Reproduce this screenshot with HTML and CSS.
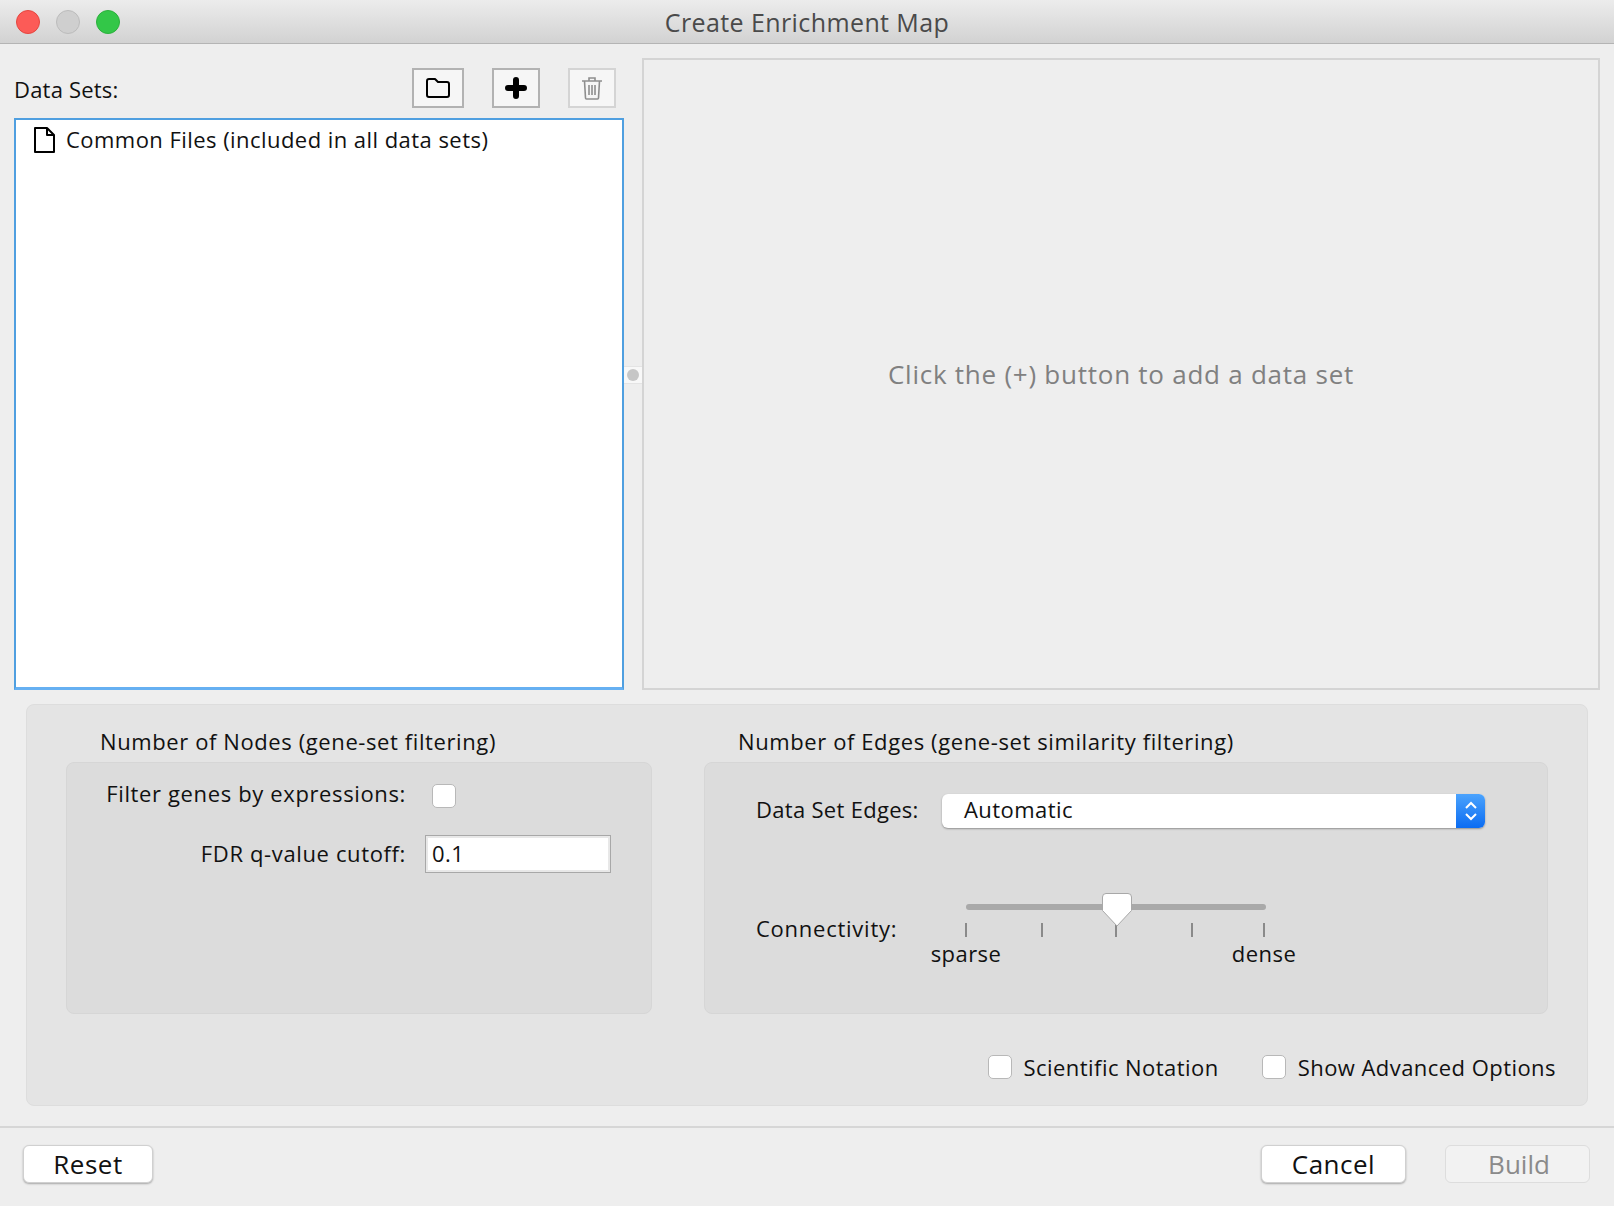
FILE: index.html
```html
<!DOCTYPE html>
<html lang="en">
<head>
    <meta charset="UTF-8">
    <title>Create Enrichment Map</title>
    <link rel="stylesheet" href="styles.css">
</head>
<body>
    <div class="window">
        <div class="titlebar">
            <div class="lights">
                <span class="light red"></span>
                <span class="light grey"></span>
                <span class="light green"></span>
            </div>
            <div class="title">Create Enrichment Map</div>
        </div>

        <div class="top">
            <div class="datasets">
                <div class="datasets-head">
                    <span class="datasets-label">Data Sets:</span>
                    <button class="tool tool-folder">
                        <svg width="25" height="22" viewBox="0 0 25 22"><path d="M3 2h6l3 3h9a2 2 0 0 1 2 2v11a2 2 0 0 1-2 2H3a2 2 0 0 1-2-2V4a2 2 0 0 1 2-2z" fill="none" stroke="#000" stroke-width="2" stroke-linejoin="round"/></svg>
                    </button>
                    <button class="tool">
                        <svg width="22" height="22" viewBox="0 0 22 22"><path d="M11 3v16M3 11h16" stroke="#000" stroke-width="6" stroke-linecap="round"/></svg>
                    </button>
                    <button class="tool tool-off">
                        <svg width="22" height="24" viewBox="0 0 22 24" fill="none" stroke="#8e8e8e" stroke-width="1.6"><path d="M1 5h20M8 5V2h6v3M3.500 5l1 17a1 1 0 0 0 1 1h11a1 1 0 0 0 1-1l1-17M8 9v10M11 9v10M14 9v10"/></svg>
                    </button>
                </div>
                <div class="list">
                    <div class="list-item">
                        <svg width="23" height="26" viewBox="0 0 23 26" fill="none" stroke="#000" stroke-width="2" stroke-linejoin="round"><path d="M2 1h12l7 7v17H2zM14 1v7h7"/></svg>
                        <span class="list-text">Common Files (included in all data sets)</span>
                    </div>
                </div>
            </div>
            <div class="divider"><span class="grip"></span></div>
            <div class="empty">Click the (+) button to add a data set</div>
        </div>

        <div class="settings">
            <div class="groups">
                <div class="group">
                    <div class="group-title">Number of Nodes (gene-set filtering)</div>
                    <div class="group-box nodes">
                        <label class="nodes-label nodes-label-first">Filter genes by expressions:</label>
                        <input class="check check-filter" type="checkbox">
                        <label class="nodes-label">FDR q-value cutoff:</label>
                        <input class="cutoff" type="text" value="0.1">
                    </div>
                </div>
                <div class="group">
                    <div class="group-title">Number of Edges (gene-set similarity filtering)</div>
                    <div class="group-box edges">
                        <label class="edges-label">Data Set Edges:</label>
                        <div class="select">
                            <span class="select-text">Automatic</span>
                            <span class="select-arrows">
                                <svg width="14" height="22" viewBox="0 0 14 22" fill="none" stroke="#fff" stroke-width="2"><path d="M2 8l5-5 5 5M2 14l5 5 5-5"/></svg>
                            </span>
                        </div>
                        <label class="connectivity">Connectivity:</label>
                        <div class="slider">
                            <div class="track"></div>
                            <div class="ticks"><i></i><i></i><i></i><i></i><i></i></div>
                            <div class="scale"><span>sparse</span><span>dense</span></div>
                            <svg class="thumb" width="32" height="36" viewBox="0 0 32 36"><path d="M5 1.500h22a3.500 3.500 0 0 1 3.500 3.500v13.500L16 34 1.500 18.500V5A3.500 3.500 0 0 1 5 1.500z" fill="#fff" stroke="#a8a8a8"/></svg>
                        </div>
                    </div>
                </div>
            </div>
            <div class="options">
                <label class="option"><input class="check" type="checkbox">Scientific Notation</label>
                <label class="option"><input class="check" type="checkbox">Show Advanced Options</label>
            </div>
        </div>

        <div class="footer">
            <button class="btn btn-reset">Reset</button>
            <button class="btn">Cancel</button>
            <button class="btn btn-off">Build</button>
        </div>
    </div>
</body>
</html>
```

FILE: styles.css
```css
* {
    box-sizing: border-box;
}
body {
    margin: 0;
    font-family: "Open Sans", sans-serif;
    font-size: 22px;
    letter-spacing: 0.45px;
    color: #111;
    background-color: #eeeeee;
}
.window {
    width: 1614px;
    height: 1206px;
    display: flex;
    flex-direction: column;
    overflow: hidden;
}
.titlebar {
    height: 44px;
    flex: none;
    display: grid;
    grid-template-columns: 1fr auto 1fr;
    align-items: center;
    background: linear-gradient(#ececec, #d2d2d2);
    border-bottom: 1px solid #b4b4b4;
}
.lights {
    display: flex;
    gap: 16px;
    padding-left: 16px;
}
.light {
    width: 24px;
    height: 24px;
    border-radius: 50%;
}
.red {
    background-color: #fc5b57;
    border: 1px solid #e5463f;
}
.grey {
    background-color: #cfcfcf;
    border: 1px solid #bcbcbc;
}
.green {
    background-color: #33c748;
    border: 1px solid #2bb03c;
}
.title {
    color: #4a4a4a;
    font-size: 25px;
    letter-spacing: 0.4px;
}
.top {
    height: 646px;
    flex: none;
    display: flex;
    padding: 14px 14px 0;
}
.datasets {
    width: 610px;
    display: flex;
    flex-direction: column;
}
.datasets-head {
    height: 60px;
    flex: none;
    display: flex;
    align-items: flex-start;
    gap: 28px;
    padding: 10px 8px 0 0;
}
.datasets-label {
    flex: 1;
    margin-top: 6px;
    letter-spacing: 0.2px;
}
.tool {
    width: 48px;
    height: 40px;
    padding: 0;
    display: flex;
    align-items: center;
    justify-content: center;
    background-color: #f6f6f6;
    border: 2px solid #b2b2b2;
}
.tool-folder {
    width: 52px;
}
.tool-off {
    border-color: #d4d4d4;
}
.list {
    flex: 1;
    background-color: #fff;
    border: 2px solid #4f9fe0;
    border-bottom: 3px solid #66b0f2;
}
.list-item {
    display: flex;
    align-items: center;
    gap: 10px;
    padding: 6px 0 0 17px;
}
.list-text {
    margin-top: -2px;
}
.divider {
    width: 18px;
    flex: none;
    display: flex;
    align-items: center;
    position: relative;
}
.grip {
    width: 18px;
    height: 18px;
    margin-top: 2px;
    display: flex;
    align-items: center;
    justify-content: center;
    background-color: #f8f8f8;
    border-top: 1px solid #e4e4e4;
    border-bottom: 1px solid #e4e4e4;
}
.grip::after {
    content: "";
    width: 12px;
    height: 12px;
    border-radius: 50%;
    background-color: #c6c6c6;
}
.empty {
    flex: 1;
    display: flex;
    align-items: center;
    justify-content: center;
    color: #808080;
    font-size: 26px;
    letter-spacing: 0.75px;
    border: 2px solid #d4d4d4;
}
.settings {
    height: 402px;
    flex: none;
    margin: 14px 26px 20px;
    padding: 0 39px;
    background-color: #e4e4e4;
    border: 1px solid #dddddd;
    border-radius: 8px;
}
.groups {
    display: grid;
    grid-template-columns: 586px 844px;
    gap: 52px;
}
.group-title {
    height: 57px;
    padding: 21px 0 0 34px;
    letter-spacing: 0.6px;
}
.group-box {
    height: 252px;
    background-color: #dcdcdc;
    border: 1px solid #d6d6d6;
    border-radius: 8px;
}
.nodes {
    display: grid;
    grid-template-columns: 339px 1fr;
    grid-template-rows: 24px 38px;
    row-gap: 27px;
    align-items: center;
    padding-top: 21px;
}
.nodes-label {
    margin-top: -2px;
    text-align: right;
    white-space: nowrap;
    letter-spacing: 0.63px;
}
.nodes-label-first {
    margin-top: -7px;
}
.check {
    appearance: none;
    width: 24px;
    height: 24px;
    margin: 0;
    flex: none;
    background-color: #fff;
    border: 1px solid #b8b8b8;
    border-radius: 5px;
}
.check-filter {
    margin-left: 26px;
}
.cutoff {
    width: 186px;
    height: 38px;
    margin-left: 19px;
    padding: 0 6px 2px;
    font: inherit;
    letter-spacing: inherit;
    color: #111;
    background-color: #fff;
    border: 1px solid #a8a8a8;
    box-shadow: inset 0 0 0 2px #e8e8e8;
}
.edges {
    display: grid;
    grid-template-columns: 186px 543px;
    grid-template-rows: 34px auto;
    row-gap: 65px;
    align-items: center;
    align-content: start;
    padding: 31px 0 0 51px;
}
.edges-label {
    margin-top: -4px;
    letter-spacing: 0.3px;
}
.select {
    height: 34px;
    display: flex;
    align-items: center;
    justify-content: space-between;
    background-color: #fff;
    border-radius: 6px;
    box-shadow: 0 1px 2px rgba(0,0,0,0.35);
}
.select-text {
    margin-top: -4px;
    padding-left: 22px;
}
.select-arrows {
    width: 29px;
    height: 34px;
    display: flex;
    align-items: center;
    justify-content: center;
    background: linear-gradient(#4ba3fd, #0b6cf2);
    border-radius: 0 6px 6px 0;
}
.connectivity {
    align-self: start;
    margin-top: 20px;
    letter-spacing: 0.75px;
}
.slider {
    position: relative;
    width: 300px;
    margin-left: 24px;
}
.track {
    height: 6px;
    margin-top: 11px;
    background-color: #a9a9a9;
    border-radius: 3px;
}
.ticks {
    display: grid;
    grid-template-columns: 76px 74px 76px 72px 1px;
    height: 14px;
    margin: 13px 0 0 -1px;
}
.ticks i {
    width: 2px;
    background-color: #8a8a8a;
}
.scale {
    display: flex;
    justify-content: space-between;
    margin: 1px -34px 0 -36px;
}
.scale span {
    width: 72px;
    text-align: center;
}
.thumb {
    position: absolute;
    left: 135px;
    top: -1px;
}
.options {
    display: flex;
    justify-content: flex-end;
    gap: 43px;
    margin: 38px -8px 0 0;
}
.option {
    display: flex;
    align-items: center;
    gap: 12px;
}
.footer {
    flex: 1;
    display: flex;
    gap: 39px;
    padding: 17px 24px 0 23px;
    border-top: 2px solid #d6d6d6;
}
.btn {
    height: 38px;
    width: 145px;
    padding: 0;
    font: inherit;
    font-size: 26px;
    letter-spacing: 0.5px;
    color: #111;
    background-color: #fff;
    border: 1px solid #d0d0d0;
    border-radius: 6px;
    box-shadow: 0 1px 2px rgba(0,0,0,0.3);
}
.btn-reset {
    width: 130px;
    margin-right: auto;
}
.btn-off {
    padding-left: 3px;
    letter-spacing: 0;
    color: #8a8a8a;
    background-color: #f2f2f2;
    box-shadow: none;
    border-color: #dddddd;
}
```
